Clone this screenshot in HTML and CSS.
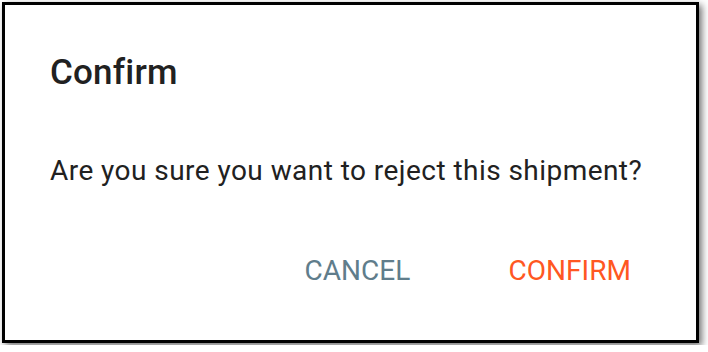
FILE: index.html
```html
<!DOCTYPE html>
<html>
<head>
<meta charset="utf-8">
<link rel="stylesheet" href="styles.css">
</head>
<body>
<div class="dialog">
  <h2 class="title">Confirm</h2>
  <p class="message">Are you sure you want to reject this shipment?</p>
  <div class="actions">
    <button class="btn btn-cancel">CANCEL</button>
    <button class="btn btn-confirm">CONFIRM</button>
  </div>
</div>
</body>
</html>
```
FILE: styles.css
```css
html, body {
  margin: 0;
  padding: 0;
  background: #ffffff;
}
body {
  padding: 2px;
  font-family: Roboto, "Liberation Sans", sans-serif;
}
.dialog {
  box-sizing: border-box;
  width: 697px;
  height: 341px;
  border: 3px solid #000;
  background: #fff;
  box-shadow: 3px 3px 7px rgba(0,0,0,0.55);
  padding: 48px 0 0 45px;
  display: flex;
  flex-direction: column;
}
.title {
  margin: 0;
  font-size: 35px;
  font-weight: 500;
  letter-spacing: 0.2px;
  color: #212121;
  line-height: 40px;
}
.message {
  margin: 60px 0 0 0;
  font-size: 28px;
  letter-spacing: 0.45px;
  line-height: 36px;
  color: #212121;
}
.actions {
  display: flex;
  justify-content: flex-end;
  gap: 98px;
  margin-top: 64px;
  padding-right: 65px;
}
.btn {
  border: none;
  background: none;
  font-family: Roboto, "Liberation Sans", sans-serif;
  font-size: 28px;
  font-weight: 400;
  letter-spacing: 0.05px;
  padding: 0;
  line-height: 36px;
  cursor: pointer;
}
.btn-cancel { color: #607d8b; }
.btn-confirm { color: #ff5722; }
```
